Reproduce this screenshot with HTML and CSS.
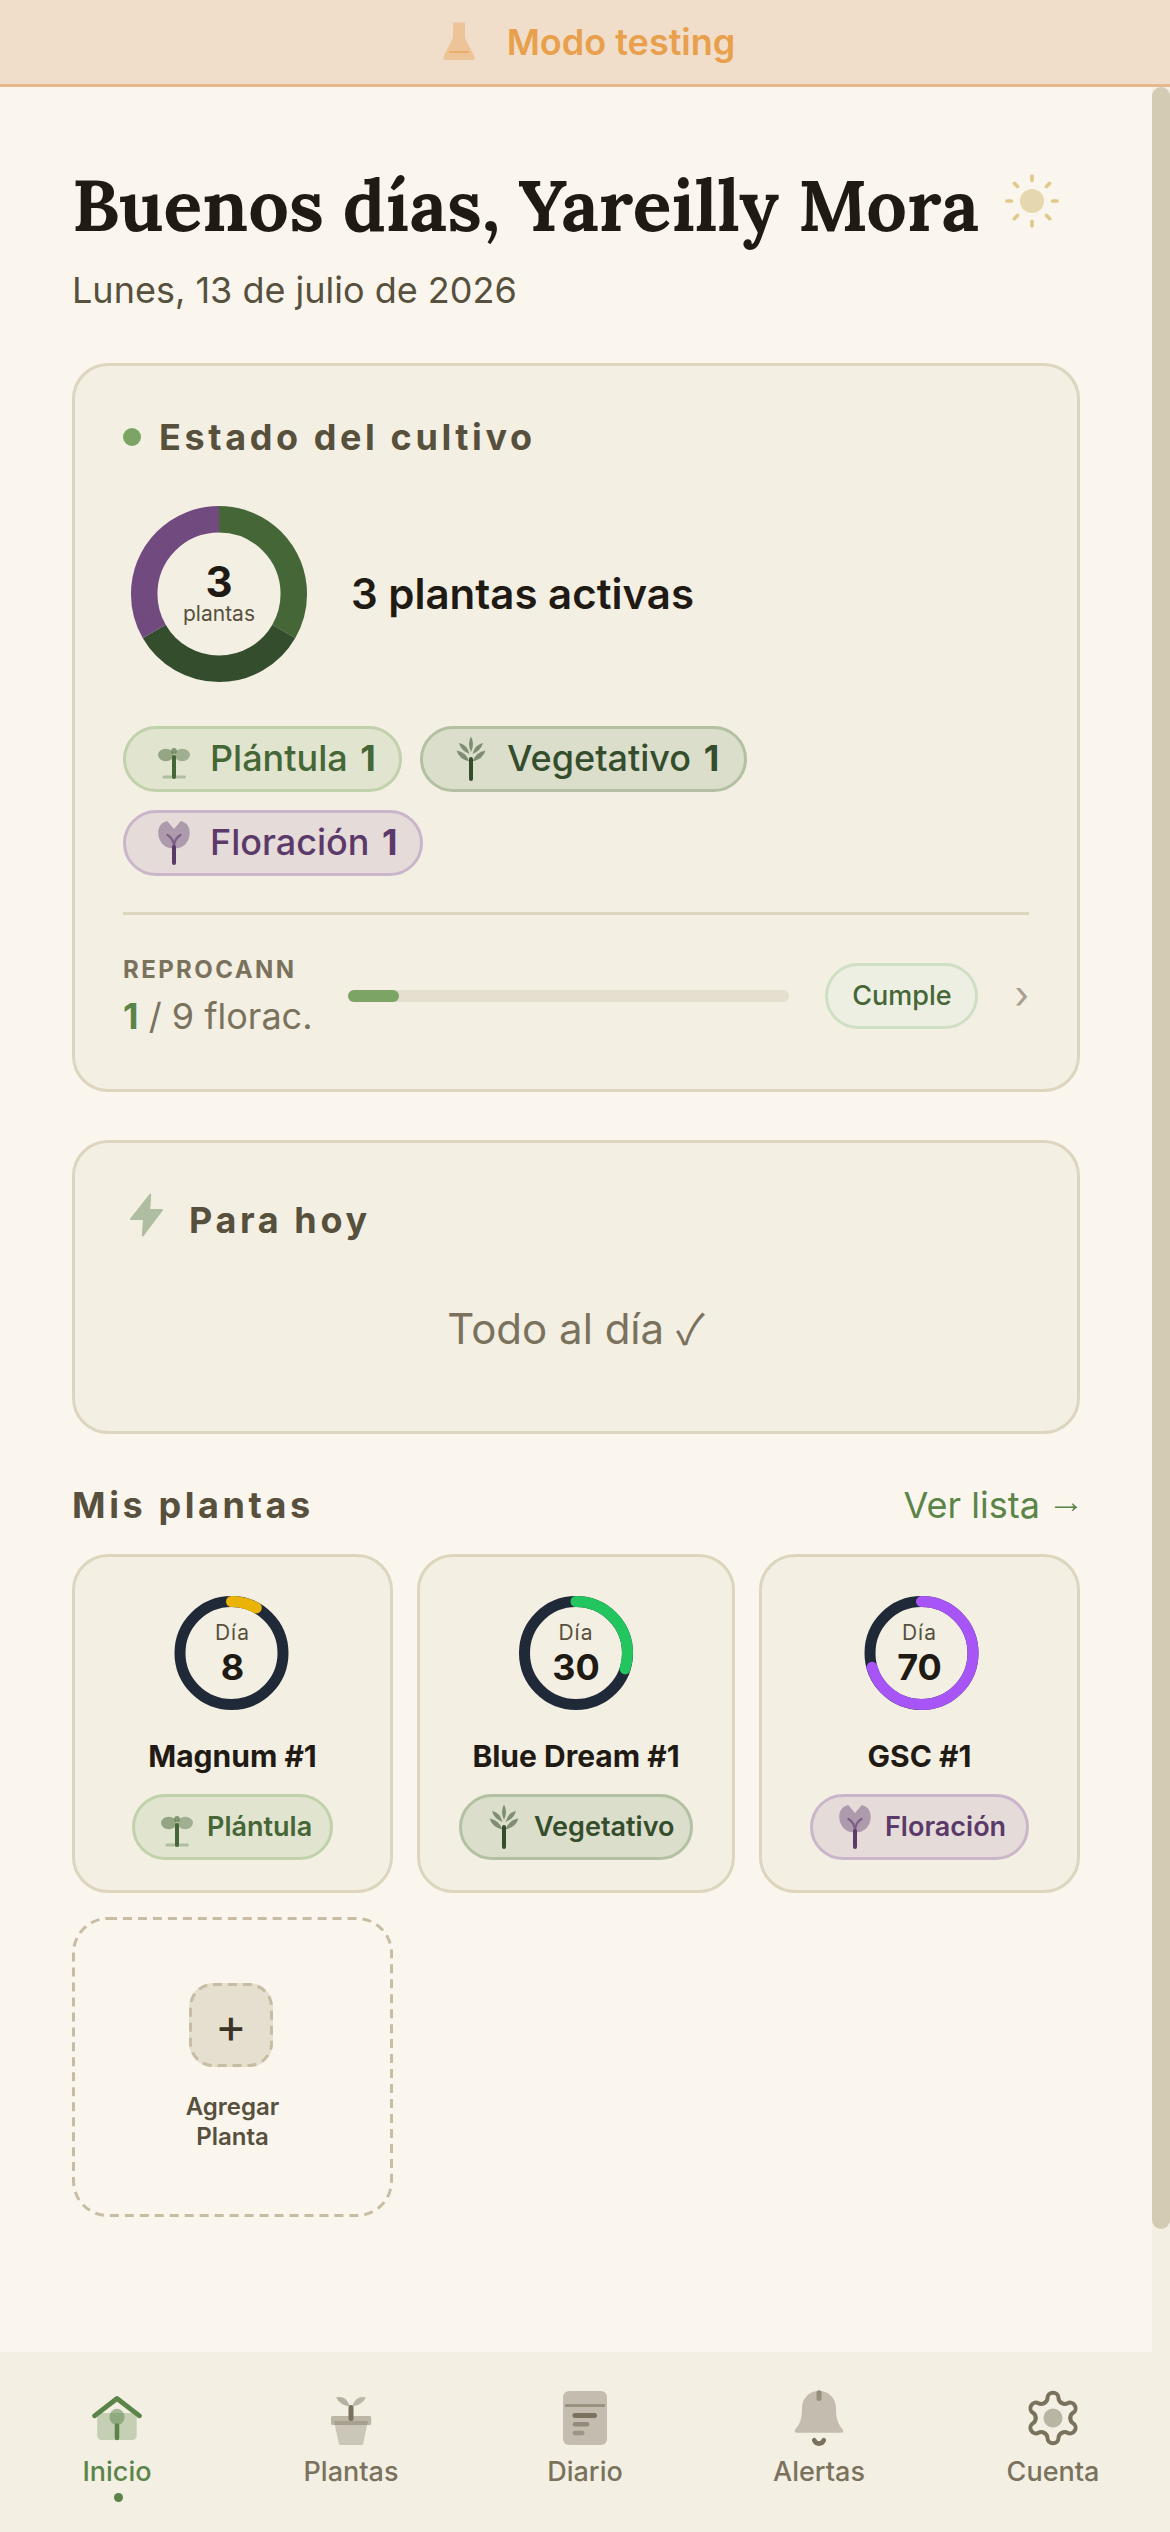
FILE: index.html
```html
<!DOCTYPE html>
<html lang="es">
<head>
<meta charset="utf-8">
<title>Inicio</title>
<link rel="stylesheet" href="styles.css">
</head>
<body>
<svg class="defs" aria-hidden="true">
  <symbol id="seedling" viewBox="0 0 48 48">
    <ellipse cx="15.8" cy="20" rx="7.7" ry="6.2" fill="currentColor" opacity=".5"/>
    <ellipse cx="32.2" cy="20" rx="7.7" ry="6.2" fill="currentColor" opacity=".42"/>
    <ellipse cx="24" cy="16" rx="2.8" ry="3" fill="currentColor" opacity=".6"/>
    <path d="M14 42H34.500" stroke="currentColor" stroke-width="3" stroke-linecap="round" opacity=".3"/>
    <path d="M24 22V42" stroke="currentColor" stroke-width="4" stroke-linecap="round"/>
  </symbol>
  <symbol id="veg" viewBox="0 0 48 48">
    <g fill="currentColor" opacity=".55">
      <path d="M24 1.500Q28 9 24 17Q20 9 24 1.500Z"/>
      <path d="M12 8Q20 9.500 22.500 19Q14 15.500 12 8Z"/>
      <path d="M36 8Q28 9.500 25.500 19Q34 15.500 36 8Z"/>
      <path d="M9.500 15.500Q19 17 22.500 26.500Q12 24 9.500 15.500Z"/>
      <path d="M38.500 15.500Q29 17 25.500 26.500Q36 24 38.500 15.500Z"/>
    </g>
    <path d="M24 24V44" stroke="currentColor" stroke-width="4" stroke-linecap="round"/>
  </symbol>
  <symbol id="flower" viewBox="0 0 48 48">
    <path d="M24 10L17.200 2C11 3.500 8.300 8 8.300 14C8.300 22 14 29.300 22 29.300H26C34 29.300 39.700 22 39.700 14C39.700 8 37 3.500 30.800 2Z" fill="currentColor" opacity=".4"/>
    <path d="M17.500 16Q23 19 24 27M30.500 16Q25 19 24 27" fill="none" stroke="currentColor" stroke-width="2.200" stroke-linecap="round" opacity=".6"/>
    <path d="M24 28V44" stroke="currentColor" stroke-width="4" stroke-linecap="round"/>
  </symbol>
</svg>

<div class="banner">
  <svg class="icon-md" viewBox="0 0 48 48" fill="currentColor">
    <path d="M18 4.500H30V20L39 37.500Q41 42 36.500 42H11.500Q7 42 9 37.500L18 20Z" opacity=".4"/>
    <path d="M14 33H34V35H14Z" opacity=".6"/>
  </svg>
  <span>Modo testing</span>
</div>

<div class="viewport">
  <main class="page">
    <header class="greeting">
      <h1>Buenos días, Yareilly Mora</h1>
      <svg class="sun" viewBox="0 0 60 60">
        <circle cx="30" cy="30" r="12" fill="#e6d8ae"/>
        <path d="M30 5V9.500M30 50.500V55M5 30H9.500M50.500 30H55M12.300 12.300L15.500 15.500M44.500 44.500L47.700 47.700M12.300 47.700L15.500 44.500M44.500 15.500L47.700 12.300" stroke="#dfc888" stroke-width="3.600" stroke-linecap="round"/>
      </svg>
    </header>
    <p class="date">Lunes, 13 de julio de 2026</p>

    <section class="card status">
      <h2 class="title status-title"><i class="dot"></i>Estado del cultivo</h2>
      <div class="summary">
        <div class="donut">
          <svg viewBox="0 0 192 192" fill="none" stroke-width="26.500">
            <g transform="rotate(-90 96 96)">
              <circle cx="96" cy="96" r="74.800" stroke="#456637" pathLength="300" stroke-dasharray="100 200"/>
              <circle cx="96" cy="96" r="74.800" stroke="#344d2c" pathLength="300" stroke-dasharray="100 200" stroke-dashoffset="-100"/>
              <circle cx="96" cy="96" r="74.800" stroke="#714b7f" pathLength="300" stroke-dasharray="100 200" stroke-dashoffset="-200"/>
            </g>
          </svg>
          <div class="donut-text"><b>3</b><span>plantas</span></div>
        </div>
        <strong>3 plantas activas</strong>
      </div>
      <div class="chips">
        <span class="chip seedling"><svg class="icon-md"><use href="#seedling"/></svg><span>Plántula <b>1</b></span></span>
        <span class="chip veg"><svg class="icon-md"><use href="#veg"/></svg><span>Vegetativo <b>1</b></span></span>
        <span class="chip flower"><svg class="icon-md"><use href="#flower"/></svg><span>Floración <b>1</b></span></span>
      </div>
      <div class="quota">
        <div class="quota-text"><span class="quota-label">REPROCANN</span><span class="quota-value"><b>1</b> / 9 florac.</span></div>
        <div class="bar"><div class="bar-fill" style="width:11.5%"></div></div>
        <span class="ok">Cumple</span>
        <span class="chevron">›</span>
      </div>
    </section>

    <section class="card today">
      <h2 class="title today-title">
        <svg class="icon-md" viewBox="0 0 48 48"><path d="M27.200 3.800L8 28H21L19.800 44.500L39 19H26.200Z" fill="#afbea1" stroke="#afbea1" stroke-width="2" stroke-linejoin="round"/></svg>
        <span>Para hoy</span>
      </h2>
      <p class="empty">Todo al día <span class="check">✓</span></p>
    </section>

    <div class="section-head"><h2 class="title">Mis plantas</h2><a class="link">Ver lista <span class="arrow">→</span></a></div>

    <div class="plants">
      <article class="card plant">
        <div class="ring">
          <svg class="nudge-left" viewBox="0 0 120 120" fill="none" stroke-width="11">
            <circle cx="60" cy="60" r="51.500" stroke="#1f2937"/>
            <circle cx="60" cy="60" r="51.500" stroke="#eab308" stroke-linecap="round" pathLength="100" stroke-dasharray="8 92" transform="rotate(-90 60 60)"/>
          </svg>
          <div class="ring-text"><span>Día</span><b>8</b></div>
        </div>
        <h3>Magnum #1</h3>
        <span class="chip small seedling"><svg class="icon-md"><use href="#seedling"/></svg><span>Plántula</span></span>
      </article>
      <article class="card plant">
        <div class="ring">
          <svg viewBox="0 0 120 120" fill="none" stroke-width="11">
            <circle cx="60" cy="60" r="51.500" stroke="#1f2937"/>
            <circle cx="60" cy="60" r="51.500" stroke="#22c55e" stroke-linecap="round" pathLength="100" stroke-dasharray="30 70" transform="rotate(-90 60 60)"/>
          </svg>
          <div class="ring-text"><span>Día</span><b>30</b></div>
        </div>
        <h3>Blue Dream #1</h3>
        <span class="chip small veg"><svg class="icon-md"><use href="#veg"/></svg><span>Vegetativo</span></span>
      </article>
      <article class="card plant">
        <div class="ring">
          <svg class="nudge-right" viewBox="0 0 120 120" fill="none" stroke-width="11">
            <circle cx="60" cy="60" r="51.500" stroke="#1f2937"/>
            <circle cx="60" cy="60" r="51.500" stroke="#a855f7" stroke-linecap="round" pathLength="100" stroke-dasharray="70.500 29.500" transform="rotate(-90 60 60)"/>
          </svg>
          <div class="ring-text"><span>Día</span><b>70</b></div>
        </div>
        <h3>GSC #1</h3>
        <span class="chip small flower"><svg class="icon-md"><use href="#flower"/></svg><span>Floración</span></span>
      </article>
      <div class="add">
        <svg class="outline" viewBox="0 0 321 300"><rect x="1.500" y="1.500" width="318" height="297" rx="34.500"/></svg>
        <span class="add-button">
          <svg class="outline" viewBox="0 0 84 84"><rect x="1.500" y="1.500" width="81" height="81" rx="22.500"/></svg>
          <span>+</span>
        </span>
        <span class="add-label">Agregar<br>Planta</span>
      </div>
    </div>
  </main>
  <div class="scrollbar"><div class="thumb"></div></div>
</div>

<nav class="tabs">
  <a class="tab active">
    <svg viewBox="0 0 72 72">
      <rect x="16.200" y="31" width="39.500" height="27" rx="4.500" fill="currentColor" opacity=".3"/>
      <ellipse cx="36" cy="35" rx="7.600" ry="8.200" fill="currentColor" opacity=".5"/>
      <path d="M36 43.500V56" stroke="currentColor" stroke-width="4.500" stroke-linecap="round"/>
      <path d="M13.500 33.800L36 16.500L58.500 33.800" fill="none" stroke="currentColor" stroke-width="4.800" stroke-linecap="round" stroke-linejoin="round"/>
    </svg>
    <span>Inicio</span><i></i>
  </a>
  <a class="tab">
    <svg viewBox="0 0 72 72" fill="currentColor">
      <path d="M19 39H53L48.200 61.500Q48 63 46.500 63H25.500Q24 63 23.800 61.500Z" opacity=".33"/>
      <rect x="16" y="34" width="40.200" height="9" rx="1.500" opacity=".45"/>
      <path d="M21 15.500Q31 13 35 24.500Q25.500 23.500 21 15.500Z" opacity=".5"/>
      <path d="M51 15.500Q41 13 37 24.500Q46.500 23.500 51 15.500Z" opacity=".45"/>
      <path d="M36 25.500V36.500" stroke="currentColor" stroke-width="5" stroke-linecap="round"/>
    </svg>
    <span>Plantas</span>
  </a>
  <a class="tab">
    <svg viewBox="0 0 72 72">
      <rect x="14" y="9" width="44" height="54" rx="6" fill="#c3bcaf"/>
      <path d="M16 23.500H56" stroke="currentColor" stroke-width="3" opacity=".55"/>
      <path d="M26 33.500H45.500" stroke="currentColor" stroke-width="5" stroke-linecap="round"/>
      <path d="M26 42.300H38" stroke="currentColor" stroke-width="4.600" stroke-linecap="round" opacity=".65"/>
      <path d="M26 51H33.200" stroke="currentColor" stroke-width="4.600" stroke-linecap="round" opacity=".5"/>
    </svg>
    <span>Diario</span>
  </a>
  <a class="tab">
    <svg viewBox="0 0 72 72">
      <path d="M36 9C26 9 19 16.500 19 26C19 36 17.500 41.500 12.200 47.500Q10.800 50.700 14 50.700H58Q61.200 50.700 59.800 47.500C54.500 41.500 53 36 53 26C53 16.500 46 9 36 9Z" fill="#c3bcaf"/>
      <path d="M36 10.500V16.500" stroke="currentColor" stroke-width="5" stroke-linecap="round" opacity=".6"/>
      <path d="M31.200 58.200C33 62.800 39 62.800 40.800 58.200" fill="none" stroke="currentColor" stroke-width="4.600" stroke-linecap="round"/>
    </svg>
    <span>Alertas</span>
  </a>
  <a class="tab">
    <svg viewBox="0 0 72 72">
      <g transform="translate(36 36)" fill="none" stroke="currentColor" stroke-width="4" stroke-linecap="round">
        <path id="tooth" d="M8.650 -15Q5.500 -16.800 5.500 -20A5.500 5.200 0 0 0 -5.500 -20Q-5.500 -16.800 -8.650 -15"/>
        <use href="#tooth" transform="rotate(60)"/>
        <use href="#tooth" transform="rotate(120)"/>
        <use href="#tooth" transform="rotate(180)"/>
        <use href="#tooth" transform="rotate(240)"/>
        <use href="#tooth" transform="rotate(300)"/>
      </g>
      <circle cx="36" cy="36" r="9.500" fill="#b9b5a5"/>
    </svg>
    <span>Cuenta</span>
  </a>
</nav>
</body>
</html>
```
FILE: styles.css
```css
* { box-sizing: border-box; margin: 0; padding: 0; }

body {
  width: 1170px;
  height: 2532px;
  display: flex;
  flex-direction: column;
  overflow: hidden;
  background: #faf6ee;
  color: #1f1a14;
  font-family: Inter, "Liberation Sans", sans-serif;
  font-size: 36px;
}

svg { display: block; flex: none; }
.defs { display: none; }
.icon-md { width: 48px; height: 48px; }

.banner {
  height: 87px;
  flex: none;
  display: flex;
  align-items: center;
  justify-content: center;
  gap: 24px;
  padding-bottom: 1px;
  background: #f0ddca;
  border-bottom: 3px solid #e4b78f;
  color: #e8a04c;
  font-weight: 600;
}

.viewport { flex: 1; display: flex; min-height: 0; }
.page { flex: 1; padding: 72px 72px 0; }
.scrollbar { width: 18px; background: #f3efe3; }
.thumb { height: 2142px; border-radius: 9px; background: #d3cbb3; }

.greeting { height: 96px; display: flex; align-items: center; gap: 23px; }
.greeting h1 {
  margin-top: -4px;
  font-family: Lora, "Noto Serif", "Liberation Serif", serif;
  font-size: 72px;
  font-weight: 700;
  line-height: 96px;
  white-space: nowrap;
}
.sun { width: 60px; height: 60px; margin-top: -12px; }
.date { margin-top: 8px; line-height: 54px; color: #57503d; }

.card { background: #f3efe3; border: 3px solid #ddd5be; border-radius: 36px; }

.title {
  font-size: 36px;
  font-weight: 700;
  line-height: 46px;
  letter-spacing: 3.6px;
  color: #57503d;
}

.status { margin-top: 46px; padding: 48px; }
.status-title { display: flex; align-items: center; gap: 18px; }
.dot { width: 18px; height: 18px; border-radius: 50%; background: #7ca565; }

.summary { margin-top: 38px; display: flex; align-items: center; gap: 36px; }
.summary strong { margin-top: -2px; font-size: 42px; font-weight: 600; }
.donut, .ring { display: grid; }
.donut > *, .ring > * { grid-area: 1 / 1; }
.donut { width: 192px; height: 192px; }
.donut-text, .ring-text {
  display: flex;
  flex-direction: column;
  align-items: center;
  justify-content: center;
}
.donut-text { padding-bottom: 3px; }
.donut-text b { font-size: 42px; line-height: 42px; }
.donut-text span { font-size: 21px; line-height: 22px; color: #57503d; }

.chips { margin-top: 36px; display: flex; flex-wrap: wrap; gap: 18px; }
.chip {
  height: 66px;
  display: flex;
  align-items: center;
  gap: 12px;
  padding: 0 24px;
  border: 3px solid;
  border-radius: 33px;
  font-weight: 500;
  white-space: nowrap;
}
.chip > span { margin-top: -2px; }
.chip b { margin-left: 3px; }
.chips .seedling { width: 279px; }
.chips .veg { width: 327px; }
.chips .flower { width: 300px; }
.chip.small { gap: 6px; padding: 0 18px; font-size: 27px; font-weight: 600; }
.plant .seedling { width: 201px; }
.plant .veg { width: 234px; }
.plant .flower { width: 219px; }
.chip.seedling { color: #456637; background: #e1e4cf; border-color: #c1d1ac; }
.chip.veg { color: #344d2c; background: #dbdecb; border-color: #b3c1a2; }
.chip.flower { color: #5b3969; background: #e5dbd9; border-color: #cab6ca; }

.quota {
  margin-top: 36px;
  padding-top: 36px;
  border-top: 3px solid #ddd5be;
  display: flex;
  align-items: center;
  height: 129px;
}
.quota-text { display: flex; flex-direction: column; gap: 3px; width: 225px; color: #7a725d; }
.quota-label { font-size: 24px; font-weight: 700; line-height: 37px; letter-spacing: 2.4px; }
.quota-value { line-height: 50px; white-space: nowrap; }
.quota-value b { color: #5b8449; }
.bar { width: 441px; height: 12px; border-radius: 6px; background: #e5dfcf; }
.bar-fill { height: 12px; border-radius: 6px; background: #7ca565; }
.ok {
  width: 153px;
  height: 66px;
  margin-left: 36px;
  padding-left: 1px;
  border: 3px solid #cfdfc3;
  border-radius: 33px;
  background: #edefe2;
  color: #456637;
  font-size: 27px;
  font-weight: 500;
  line-height: 60px;
  text-align: center;
}
.chevron { margin: -4px 0 0 auto; color: #a89f91; font-size: 38px; }

.today { margin-top: 48px; height: 294px; padding: 48px; }
.today-title { height: 48px; display: flex; align-items: center; gap: 18px; }
.today-title span { padding-top: 10px; }
.empty { margin-top: 35px; font-size: 42px; line-height: 109px; text-align: center; color: #7a725d; }
.check { font-family: "Noto Sans CJK JP", Inter, sans-serif; line-height: 0; }
.arrow { font-family: "Noto Sans Symbols", Inter, sans-serif; font-size: 32px; line-height: 0; }

.section-head { margin: 47px 0 25px; height: 48px; display: flex; align-items: center; justify-content: space-between; }
.link { margin-right: -2px; color: #5b8449; line-height: 48px; white-space: nowrap; }

.plants { display: grid; grid-template-columns: 321px 318px 321px; gap: 24px; }
.plant { height: 339px; padding-top: 36px; display: flex; flex-direction: column; align-items: center; }
.ring { width: 120px; height: 120px; }
.nudge-left { transform: translateX(-1.5px); }
.nudge-right { transform: translateX(1.5px); }
.ring-text { gap: 4px; }
.ring-text span { font-size: 21px; line-height: 24px; letter-spacing: 1px; color: #57503d; }
.ring-text b { line-height: 36px; }
.plant h3 { margin: 24px 0 18px; font-size: 30px; font-weight: 700; line-height: 39px; }

.add {
  position: relative;
  height: 300px;
  padding: 66px 3px 0 0;
  display: flex;
  flex-direction: column;
  align-items: center;
  gap: 25px;
}
.outline {
  position: absolute;
  inset: 0;
  fill: none;
  stroke: #c8bda4;
  stroke-width: 3;
  stroke-dasharray: 9 5.97;
}
.add-button {
  position: relative;
  width: 84px;
  height: 84px;
  border-radius: 24px;
  background: #e5dfcf;
  color: #3b3426;
  font-size: 48px;
  line-height: 86px;
  text-align: center;
}
.add-label { margin-left: 3px; font-size: 24px; font-weight: 600; line-height: 30px; text-align: center; color: #57503d; }

.tabs {
  height: 180px;
  flex: none;
  padding-top: 30px;
  display: grid;
  grid-template-columns: repeat(5, 1fr);
  background: #f3efe3;
}
.tab {
  display: flex;
  flex-direction: column;
  align-items: center;
  color: #7a725d;
  font-size: 27px;
  font-weight: 500;
  line-height: 35px;
}
.tab svg { width: 72px; height: 72px; }
.tab.active { color: #5b8449; }
.tab i { width: 9px; height: 9px; margin: 4px 0 0 3px; border-radius: 50%; background: currentColor; }
```
